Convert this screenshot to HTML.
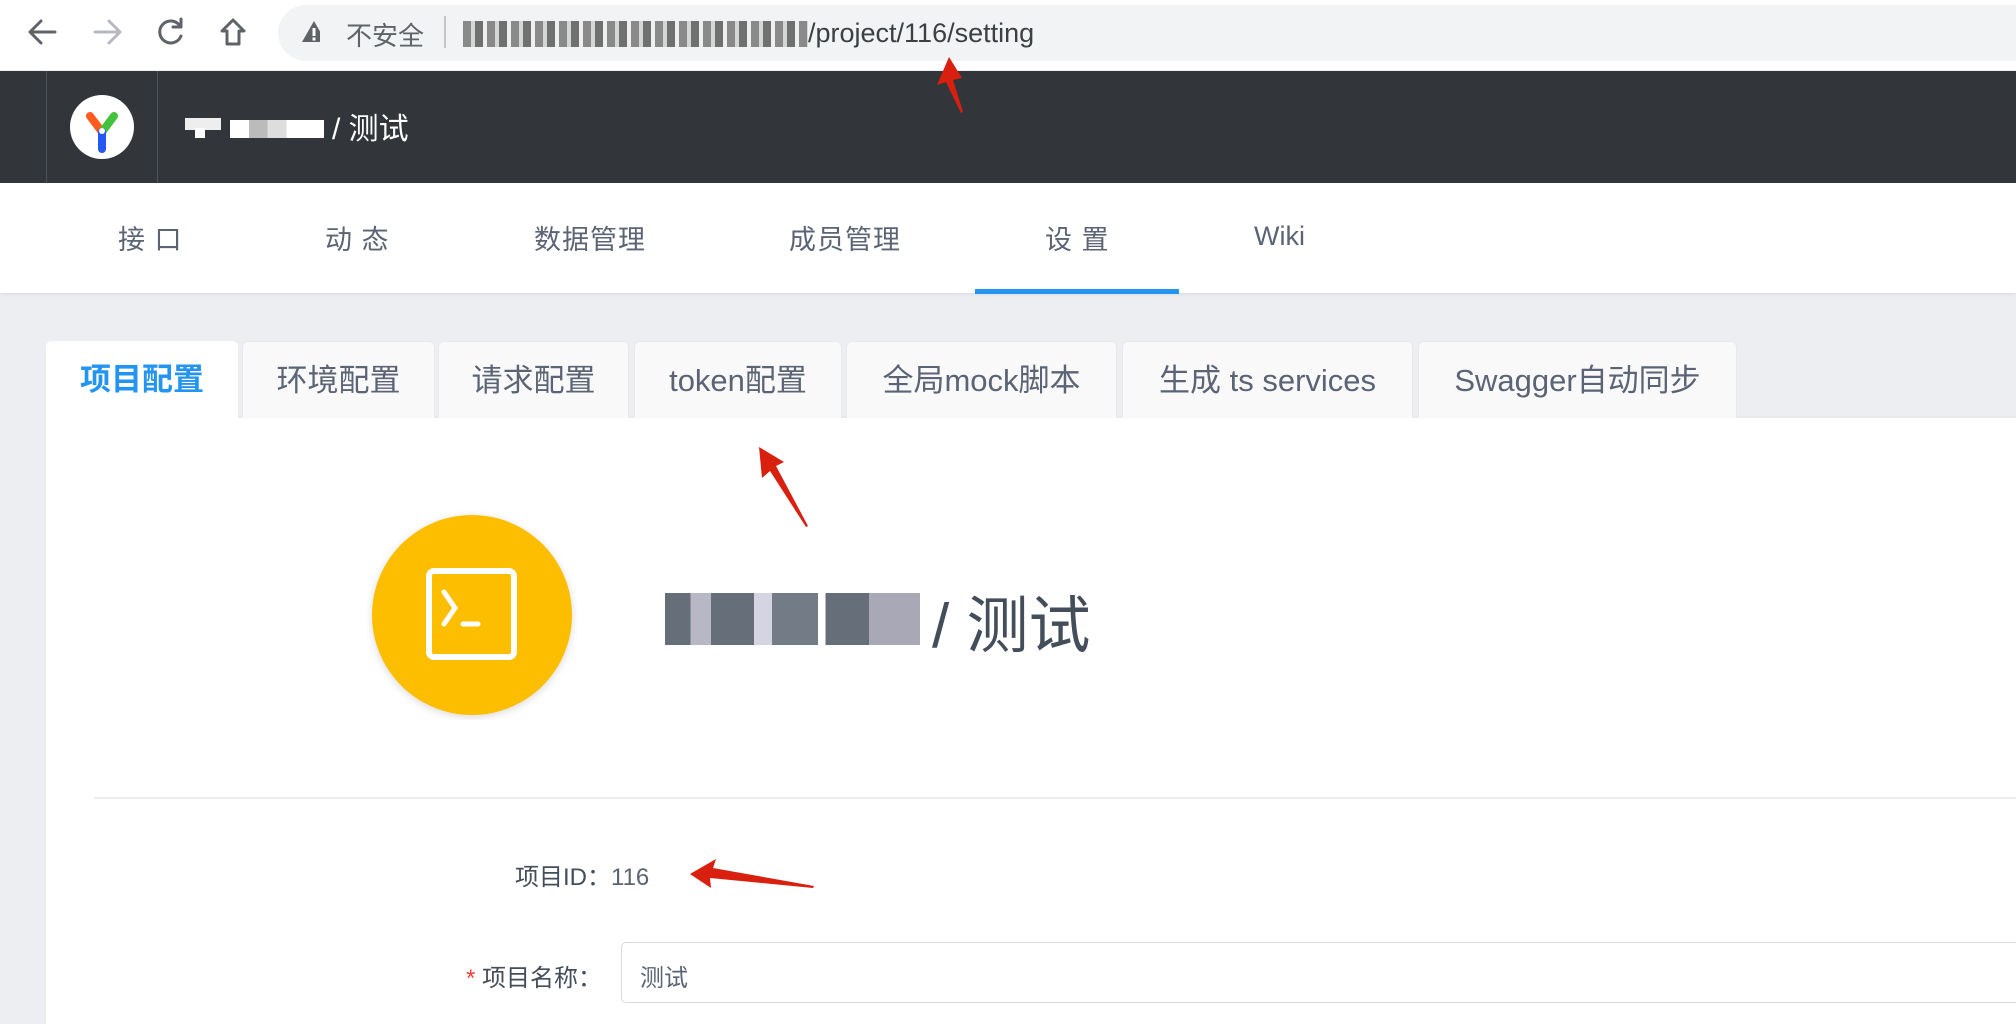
<!DOCTYPE html>
<html><head><meta charset="utf-8"><style>
*{margin:0;padding:0;box-sizing:border-box}
body{width:2016px;height:1024px;overflow:hidden;background:#eceef1;position:relative;font-family:"Liberation Sans","Noto Sans CJK SC",sans-serif;color:#5a6270}
.a{position:absolute;white-space:nowrap}
.tab{position:absolute;top:341px;height:77px;background:#f9f9fa;border:1px solid #e9e9ec;border-bottom:none;border-radius:6px 6px 0 0;font-size:31px;line-height:77px;text-align:center;color:#5b6475}
.nav{position:absolute;top:218px;font-size:27px;color:#5b6475;letter-spacing:1px}
</style></head><body>
<div class="a" style="left:0;top:0;width:2016px;height:70px;background:#fff"></div>
<div class="a" style="left:278px;top:5px;width:1800px;height:56px;background:#f1f3f4;border-radius:28px"></div>
<svg class="a" style="left:0;top:0" width="320" height="70">
<g fill="none" stroke-width="3" stroke-linecap="round" stroke-linejoin="round">
<path d="M55 32H30M41 21L30 32L41 43" stroke="#5f6368"/>
<path d="M95 32H120M109 21L120 32L109 43" stroke="#b6b9bd"/>
<path d="M180 26A11 11 0 1 0 181 36" stroke="#5f6368"/><path d="M181 19V27H173" stroke="#5f6368"/>
<path d="M233 20L244 31H239V44H227V31H222Z" stroke="#5f6368"/>
</g>
<path d="M314 21L302 42H326Z" fill="#5f6368"/><rect x="312.5" y="28" width="3" height="8" fill="#fff"/><rect x="312.5" y="37.5" width="3" height="3" fill="#fff"/>
</svg>
<div class="a" style="left:346px;top:16px;font-size:26px;color:#5f6368">不安全</div>
<div class="a" style="left:444px;top:16px;width:2px;height:32px;background:#c4c7ca"></div>
<div class="a" style="left:463px;top:21px;width:345px;height:26px;background:repeating-linear-gradient(90deg,#666 0 8px,#ccc 8px 12px,#444 12px 20px,#eee 20px 24px);opacity:.75"></div>
<div class="a" style="left:808px;top:18px;font-size:27px;color:#3c4043">/project/116/setting</div>
<div class="a" style="left:0;top:71px;width:2016px;height:112px;background:#32363b"></div>
<div class="a" style="left:46px;top:71px;width:1px;height:112px;background:#4d5560"></div>
<div class="a" style="left:157px;top:71px;width:1px;height:112px;background:#4d5560"></div>
<svg class="a" style="left:70px;top:95px" width="64" height="64"><circle cx="32" cy="32" r="32" fill="#fff"/>
<path d="M20 21L32 37" stroke="#ff5a1f" stroke-width="8" stroke-linecap="round"/>
<path d="M44 21L32 37" stroke="#44c23c" stroke-width="8" stroke-linecap="round"/>
<path d="M32 37V54" stroke="#2458f0" stroke-width="8" stroke-linecap="round"/><circle cx="32" cy="36" r="3" fill="#fff"/></svg>
<div class="a" style="left:185px;top:118px;width:36px;height:12px;background:#eee"></div>
<div class="a" style="left:195px;top:128px;width:10px;height:10px;background:#fff"></div>
<div class="a" style="left:230px;top:120px;width:94px;height:18px;background:linear-gradient(90deg,#fff 0 20%,#bbb 20% 40%,#ddd 40% 60%,#fff 60%)"></div>
<div class="a" style="left:332px;top:104px;font-size:30px;color:#fff">/ 测试</div>
<div class="a" style="left:0;top:183px;width:2016px;height:110px;background:#fff;box-shadow:0 2px 3px rgba(0,0,0,.06)"></div>
<div class="nav" style="left:118px">接 口</div>
<div class="nav" style="left:325px">动 态</div>
<div class="nav" style="left:534px">数据管理</div>
<div class="nav" style="left:789px">成员管理</div>
<div class="nav" style="left:1045px">设 置</div>
<div class="nav" style="left:1254px;top:221px;letter-spacing:0">Wiki</div>
<div class="a" style="left:975px;top:289px;width:204px;height:5px;background:#2395f1"></div>
<div class="a" style="left:46px;top:418px;width:1970px;height:606px;background:#fff"></div>
<div class="a" style="left:46px;top:416px;width:1970px;height:2px;background:#e9e9ec"></div>
<div class="tab" style="left:46px;width:192px;background:#fff;color:#2395f1;height:79px;border:none;font-weight:bold">项目配置</div>
<div class="tab" style="left:242px;width:193px">环境配置</div>
<div class="tab" style="left:438px;width:191px">请求配置</div>
<div class="tab" style="left:634px;width:208px">token配置</div>
<div class="tab" style="left:846px;width:271px">全局mock脚本</div>
<div class="tab" style="left:1122px;width:291px">生成 ts services</div>
<div class="tab" style="left:1418px;width:319px">Swagger自动同步</div>
<svg class="a" style="left:367px;top:510px" width="210" height="210"><circle cx="105" cy="105" r="100" fill="#fdbe00" style="filter:drop-shadow(0 2px 4px rgba(0,0,0,.15))"/>
<rect x="62" y="61" width="85" height="86" rx="5" fill="none" stroke="#fff" stroke-width="6"/>
<path d="M77 82L88 98L77 114" fill="none" stroke="#fff" stroke-width="5" stroke-linecap="round"/><path d="M96 114H111" stroke="#fff" stroke-width="5" stroke-linecap="round"/></svg>
<div class="a" style="left:665px;top:593px;width:255px;height:52px;background:linear-gradient(90deg,#4a5561 0 10%,#aab 10% 18%,#4a5561 18% 35%,#ccd 35% 42%,#5a6571 42% 60%,#fff 60% 63%,#4a5561 63% 80%,#99a 80% 100%);opacity:.85"></div>
<div class="a" style="left:932px;top:575px;font-size:62px;color:#434e5a">/ 测试</div>
<div class="a" style="left:94px;top:797px;width:1922px;height:2px;background:#ececec"></div>
<div class="a" style="left:515px;top:857px;font-size:24px;color:#434e5a">项目ID：<span style="color:#5b6475">116</span></div>
<div class="a" style="left:466px;top:958px;font-size:24px;color:#434e5a"><span style="color:#f04134">* </span>项目名称：</div>
<div class="a" style="left:621px;top:942px;width:1420px;height:61px;border:1.5px solid #d9d9d9;border-radius:5px"></div>
<div class="a" style="left:640px;top:958px;font-size:24px;color:#5b6475">测试</div>
<svg class="a" style="left:0;top:0" width="2016" height="1024">
<g fill="#d9200f">
<path d="M949 57L937 85L946 82L961 113L963 112L953 80L962 78Z"/>
<path d="M759 447L762 478L770 471L806 527L808 526L776 466L784 462Z"/>
<path d="M690 874L716 859L713 868L814 886L813 888L710 878L711 888Z"/>
</g></svg>
</body></html>
